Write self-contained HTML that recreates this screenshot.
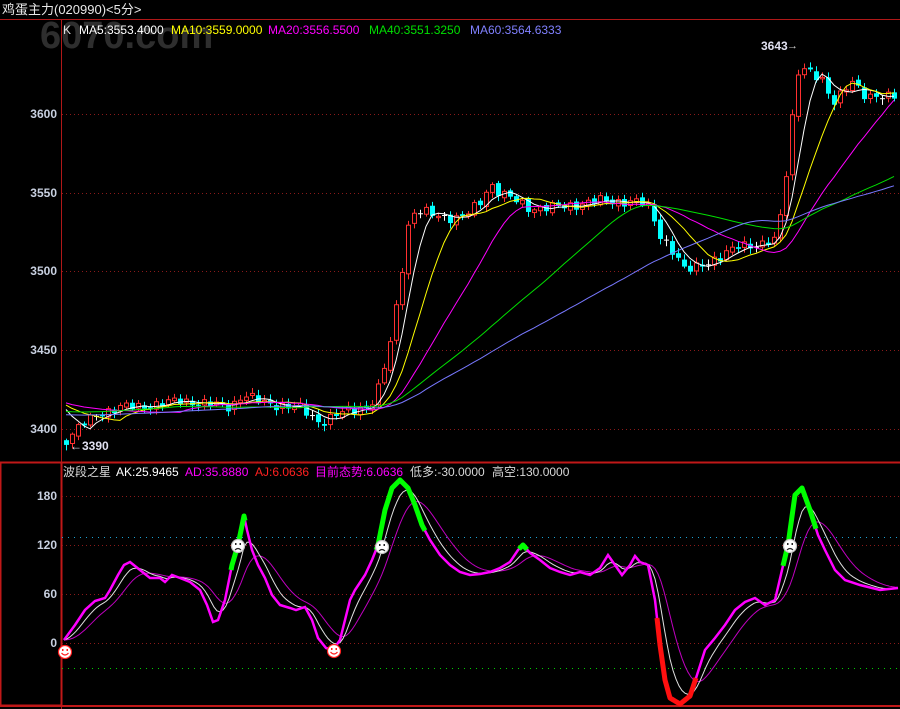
<!DOCTYPE html>
<html><head><meta charset="utf-8"><style>
html,body{margin:0;padding:0;background:#000;width:900px;height:709px;overflow:hidden}
svg{display:block}
text{font-family:"Liberation Sans","Noto Sans CJK SC",sans-serif}
</style></head><body>
<svg id="s" width="900" height="709" viewBox="0 0 900 709" xmlns="http://www.w3.org/2000/svg">
<rect width="900" height="709" fill="#000"/>
<text x="40" y="48" font-size="38" font-weight="bold" fill="#2e2e2e">6070.com</text>
<text x="2" y="14" font-size="13" fill="#e8e8e8">鸡蛋主力(020990)&lt;5分&gt;</text>
<line x1="0" y1="19.5" x2="900" y2="19.5" stroke="#b01818"/>
<line x1="61.5" y1="19" x2="61.5" y2="709" stroke="#b01818"/>
<rect x="0.5" y="462.5" width="61" height="243" fill="none" stroke="#c01818" stroke-width="2"/>
<line x1="0" y1="462.5" x2="900" y2="462.5" stroke="#c01818" stroke-width="2"/>
<line x1="0" y1="706" x2="900" y2="706" stroke="#c01818" stroke-width="2"/>
<g stroke="#8a1a1a" stroke-dasharray="1,3">
<line x1="62" y1="114.5" x2="900" y2="114.5"/><line x1="62" y1="193.5" x2="900" y2="193.5"/>
<line x1="62" y1="271.5" x2="900" y2="271.5"/><line x1="62" y1="350.5" x2="900" y2="350.5"/>
<line x1="62" y1="429.5" x2="900" y2="429.5"/>
<line x1="62" y1="496.5" x2="900" y2="496.5"/><line x1="62" y1="545.5" x2="900" y2="545.5"/>
<line x1="62" y1="594.5" x2="900" y2="594.5"/><line x1="62" y1="643.5" x2="900" y2="643.5"/>
</g>
<line x1="62" y1="537.5" x2="900" y2="537.5" stroke="#1aa0d0" stroke-dasharray="1,5"/>
<line x1="62" y1="668.5" x2="900" y2="668.5" stroke="#00d000" stroke-dasharray="1,5"/>
<g font-size="12" font-weight="bold" fill="#c8d0e0" text-anchor="end">
<text x="57" y="118">3600</text><text x="57" y="197">3550</text><text x="57" y="275">3500</text>
<text x="57" y="354">3450</text><text x="57" y="433">3400</text>
<text x="57" y="500">180</text><text x="57" y="549">120</text><text x="57" y="598">60</text><text x="57" y="647">0</text>
</g>
<g font-size="12">
<text x="63" y="34" fill="#e0e0e0">K</text>
<text x="79" y="34" fill="#fff">MA5:3553.4000</text>
<text x="171" y="34" fill="#ffff00">MA10:3559.0000</text>
<text x="268" y="34" fill="#ff00ff">MA20:3556.5500</text>
<text x="369" y="34" fill="#00e000">MA40:3551.3250</text>
<text x="470" y="34" fill="#8080ff">MA60:3564.6333</text>
<text x="63" y="476" fill="#d8d8d8">波段之星</text>
<text x="116" y="476" fill="#fff">AK:25.9465</text>
<text x="185" y="476" fill="#ff00ff">AD:35.8880</text>
<text x="255" y="476" fill="#ff2020">AJ:6.0636</text>
<text x="315" y="476" fill="#ff00ff">目前态势:6.0636</text>
<text x="410" y="476" fill="#d8d8d8">低多:-30.0000</text>
<text x="492" y="476" fill="#d8d8d8">高空:130.0000</text>
<text x="761" y="50" fill="#e0e0f0" font-weight="bold">3643</text>
<text x="70" y="450" fill="#e0e0f0" font-weight="bold">←3390</text>
</g>
<text x="787" y="49" font-size="11" fill="#d0d0d0">→</text>
<g id="k"></g><g id="ma"></g><g id="ind"></g>
</svg>
<script>
var NS="http://www.w3.org/2000/svg",S=document.getElementById('s');
function el(t,a,p){var e=document.createElementNS(NS,t);for(var k in a)e.setAttribute(k,a[k]);(p||S).appendChild(e);return e;}
function py(p){return 429-(p-3400)*1.574;}
var kp=[[66,3393],[80,3402],[100,3410],[120,3414],[140,3414],[180,3418],[230,3414],[243,3422],[260,3417],[300,3413],[320,3404],[340,3410],[370,3415],[380,3428],[390,3455],[400,3492],[406,3525],[412,3537],[420,3538],[440,3535],[460,3534],[470,3538],[480,3544],[490,3556],[500,3550],[515,3545],[530,3540],[560,3541],[600,3545],[640,3544],[650,3540],[660,3523],[670,3515],[685,3500],[700,3505],[720,3508],[740,3518],[760,3516],[775,3520],[782,3542],[790,3585],[796,3625],[802,3630],[812,3624],[822,3622],[832,3608],[842,3614],[852,3620],[862,3612],[880,3612],[898,3610]];
function interp(x){for(var i=1;i<kp.length;i++){if(x<=kp[i][0]){var a=kp[i-1],b=kp[i];return a[1]+(b[1]-a[1])*(x-a[0])/(b[0]-a[0]);}}return kp[kp.length-1][1];}
var pre=[];for(var i=0;i<60;i++)pre.push(i<40?3405:3418);
var xs=[],cl=[];for(var x=66;x<=898;x+=6){xs.push(x);cl.push(interp(x)+2.5*Math.sin(x*1.7)+1.2*Math.cos(x*0.9));}
var all=pre.concat(cl),g=document.getElementById('k');
for(var i=0;i<cl.length;i++){
 var c=cl[i],o=i?cl[i-1]+1.2*Math.sin(i*2.3):c+3,x=xs[i];
 var hi=Math.max(o,c)+1+2.5*Math.abs(Math.sin(i*3.1)),lo=Math.min(o,c)-1-2.5*Math.abs(Math.cos(i*2.7));
 if(x==243)hi=3446;
 var col=Math.abs(c-o)<0.6?'#fff':(c>o?'#ff3030':'#00ffff');
 el('line',{x1:x+.5,x2:x+.5,y1:py(hi),y2:py(lo),stroke:col},g);
 var t=py(Math.max(o,c)),b=py(Math.min(o,c));
 if(col=='#fff')el('line',{x1:x-2,x2:x+3,y1:t,y2:t,stroke:col},g);
 else if(col=='#ff3030')el('rect',{x:x-1.5,y:t,width:4,height:Math.max(b-t,1),fill:'#000',stroke:col},g);
 else el('rect',{x:x-2,y:t,width:5,height:Math.max(b-t,1),fill:col},g);
}
var mg=document.getElementById('ma');
[[5,'#fff'],[10,'#ffff00'],[20,'#ff00ff'],[40,'#00e000'],[60,'#7878ff']].forEach(function(m){
 var pts=[];for(var i=0;i<cl.length;i++){var j=i+60,s=0;for(var k=j-m[0]+1;k<=j;k++)s+=all[k];pts.push(xs[i]+','+py(s/m[0]).toFixed(1));}
 el('polyline',{points:pts.join(' '),fill:'none',stroke:m[1],'stroke-width':1},mg);
});
var ip=[[64,640],[75,625],[85,610],[95,601],[105,598],[110,590],[118,575],[124,565],[130,562],[140,570],[150,578],[160,578],[165,582],[172,575],[180,578],[190,582],[200,590],[207,605],[213,622],[218,620],[225,600],[232,565],[238,545],[244,516],[247,530],[252,550],[258,565],[265,578],[272,595],[280,605],[290,608],[296,610],[305,607],[312,620],[318,638],[326,648],[333,650],[340,640],[345,620],[350,600],[355,590],[365,575],[372,560],[378,545],[385,510],[392,488],[400,480],[408,488],[415,505],[422,525],[430,540],[440,555],[450,565],[460,572],[470,575],[480,574],[490,572],[500,568],[510,562],[518,550],[523,545],[530,553],[540,560],[550,568],[560,572],[570,575],[580,572],[590,575],[600,568],[608,555],[615,565],[622,575],[630,565],[635,556],[640,562],[648,565],[655,600],[660,645],[665,680],[670,698],[680,704],[690,696],[697,675],[705,650],[715,638],[725,625],[735,610],[745,602],[755,598],[765,605],[775,600],[782,570],[788,545],[795,495],[802,488],[810,510],[818,535],[825,550],[835,570],[845,580],[860,585],[880,590],[898,588]];
var ig=document.getElementById('ind');
function iv(x){for(var i=1;i<ip.length;i++){if(x<=ip[i][0]){var a=ip[i-1],b=ip[i];return a[1]+(b[1]-a[1])*(x-a[0])/(b[0]-a[0]);}}return ip[ip.length-1][1];}
var w=[],m2=[],e1=640,e2=640;
for(var x=64;x<=898;x+=3){var v=iv(x);e1=e1+(v-e1)*0.28;e2=e2+(e1-e2)*0.22;w.push(x+','+e1.toFixed(1));m2.push(x+','+e2.toFixed(1));}
el('polyline',{points:m2.join(' '),fill:'none',stroke:'#c000c0','stroke-width':1},ig);
el('polyline',{points:w.join(' '),fill:'none',stroke:'#e0e0e0','stroke-width':1},ig);
el('polyline',{points:ip.map(function(p){return p.join(',')}).join(' '),fill:'none',stroke:'#ff00ff','stroke-width':2.5},ig);
function seg(a,b,col){var p=[];for(var x=a;x<=b;x+=1)p.push(x+','+iv(x).toFixed(1));el('polyline',{points:p.join(' '),fill:'none',stroke:col,'stroke-width':5,'stroke-linejoin':'round'},ig);}
seg(231,245,'#00ff00');seg(376,425,'#00ff00');seg(519,527,'#00ff00');seg(783,816,'#00ff00');seg(657,696,'#ff1010');
function face(x,y,happy){var f=el('g',{},ig);el('circle',{cx:x,cy:y,r:6.5,fill:'#fff',stroke:happy?'#ff2020':'#c0c0c0','stroke-width':1.2},f);
 var c=happy?'#ff2020':'#222';el('rect',{x:x-3,y:y-3,width:1.5,height:2,fill:c},f);el('rect',{x:x+1.5,y:y-3,width:1.5,height:2,fill:c},f);
 el('path',{d:happy?('M'+(x-3.5)+' '+(y+1)+' Q'+x+' '+(y+5)+' '+(x+3.5)+' '+(y+1)):('M'+(x-3)+' '+(y+4)+' Q'+x+' '+(y+1)+' '+(x+3)+' '+(y+4)),fill:'none',stroke:c,'stroke-width':1.2},f);}
face(65,652,1);face(334,651,1);face(238,546,0);face(382,547,0);face(790,546,0);
</script>
</body></html>
